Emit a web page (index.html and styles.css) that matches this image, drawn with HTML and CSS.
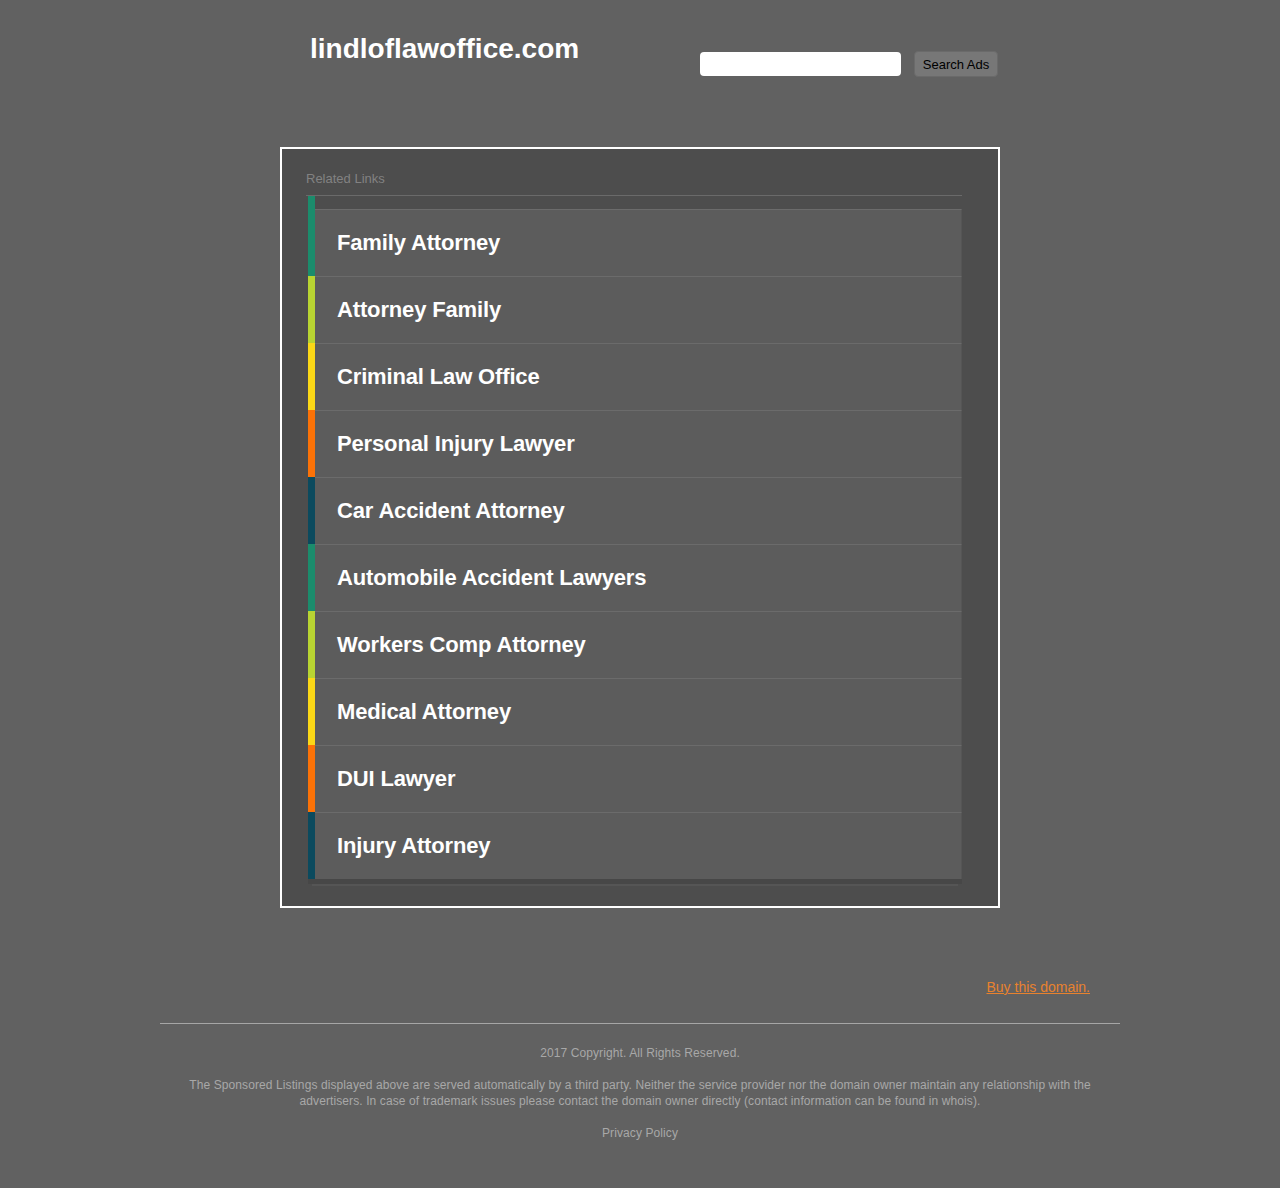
FILE: index.html
```html
<!DOCTYPE html>
<html lang="en">

<head>
  <meta charset="UTF-8">
  <title>lindloflawoffice.com</title>
  <link rel="stylesheet" href="styles.css">
</head>

<body>
  <div class="header">
    <h1 class="domain">lindloflawoffice.com</h1>
    <form class="search">
      <input type="text" class="search-input">
      <button type="button" class="search-btn">Search Ads</button>
    </form>
  </div>

  <div class="links-box">
    <h2 class="links-title">Related Links</h2>
    <ul class="link-list">
      <li class="c-green"><a href="#">Family Attorney</a></li>
      <li class="c-lime"><a href="#">Attorney Family</a></li>
      <li class="c-yellow"><a href="#">Criminal Law Office</a></li>
      <li class="c-orange"><a href="#">Personal Injury Lawyer</a></li>
      <li class="c-teal"><a href="#">Car Accident Attorney</a></li>
      <li class="c-green"><a href="#">Automobile Accident Lawyers</a></li>
      <li class="c-lime"><a href="#">Workers Comp Attorney</a></li>
      <li class="c-yellow"><a href="#">Medical Attorney</a></li>
      <li class="c-orange"><a href="#">DUI Lawyer</a></li>
      <li class="c-teal"><a href="#">Injury Attorney</a></li>
    </ul>
  </div>

  <div class="buy">
    <a href="#">Buy this domain.</a>
  </div>

  <div class="footer">
    <p>2017 Copyright. All Rights Reserved.</p>
    <p>The Sponsored Listings displayed above are served automatically by a third party. Neither the service provider nor the domain owner maintain any relationship with the advertisers. In case of trademark issues please contact the domain owner directly (contact information can be found in whois).</p>
    <p><a href="#">Privacy Policy</a></p>
  </div>
</body>

</html>
```

FILE: styles.css
```css
/* General Reset */
body,
html {
  margin: 0;
  padding: 0;
}

body {
  background: #616161;
  font-family: 'Liberation Sans', Arial, sans-serif;
  color: #fff;
}

/* Header */
.header {
  width: 720px;
  margin: 0 auto;
  padding-top: 33px;
  height: 147px;
  box-sizing: border-box;
  display: flex;
  justify-content: space-between;
  align-items: flex-start;
}

.domain {
  margin: 0 0 0 30px;
  font-size: 28px;
  line-height: 32px;
  font-weight: bold;
  color: #fff;
}

.search {
  display: flex;
  align-items: center;
  gap: 13px;
  margin-top: 18px;
  margin-right: 2px;
}

.search-input {
  width: 201px;
  height: 24px;
  box-sizing: border-box;
  border: none;
  border-radius: 4px;
  background: #fff;
  padding: 0 6px;
}

.search-btn {
  width: 84px;
  height: 26px;
  border: 1px solid #6a6a6a;
  border-radius: 4px;
  background: #777;
  color: #000;
  font-family: 'Liberation Sans', Arial, sans-serif;
  font-size: 13px;
  padding: 0;
}

/* Links box */
.links-box {
  width: 720px;
  margin: 0 auto;
  box-sizing: border-box;
  border: 2px solid #fff;
  background: #4d4d4d;
  padding: 22px 36px 22px 24px;
}

.links-title {
  margin: 0;
  font-size: 13px;
  font-weight: normal;
  color: #828282;
  line-height: 16px;
  padding-bottom: 8px;
  border-bottom: 1px solid #6a6a6a;
}

.link-list {
  list-style: none;
  margin: 0 0 0 2px;
  padding: 0;
  border-bottom: 5px solid #474747;
  box-shadow: 0 6px 0 -4px #555;
}

.link-list li {
  border-left: 7px solid #888;
}

.link-list li:first-child {
  padding-top: 13px;
}

.link-list li a {
  display: block;
  height: 67px;
  line-height: 66px;
  box-sizing: border-box;
  background: #5c5c5c;
  border-top: 1px solid #6b6b6b;
  border-right: 1px solid #555;
  padding-left: 22px;
  color: #fff;
  font-size: 22px;
  font-weight: bold;
  letter-spacing: -0.15px;
  text-decoration: none;
}

.link-list li a:hover {
  background: #656565;
}

.c-green {
  border-left-color: #1b8c6c !important;
}

.c-lime {
  border-left-color: #b8d432 !important;
}

.c-yellow {
  border-left-color: #fbd817 !important;
}

.c-orange {
  border-left-color: #fb7207 !important;
}

.c-teal {
  border-left-color: #0b4a5e !important;
}

/* Buy link */
.buy {
  width: 960px;
  margin: 70px auto 0 auto;
  padding: 0 30px 27px 0;
  box-sizing: border-box;
  text-align: right;
  border-bottom: 1px solid #a6a6a6;
}

.buy a {
  color: #e8822e;
  font-size: 14px;
}

/* Footer */
.footer {
  width: 960px;
  margin: 0 auto;
  padding: 21px 20px 40px 20px;
  box-sizing: border-box;
  text-align: center;
  font-size: 12px;
  line-height: 16px;
  letter-spacing: 0.1px;
  color: #a8a8a8;
}

.footer p {
  margin: 0 0 16px 0;
}

.footer a {
  color: #a8a8a8;
  text-decoration: none;
}
```
